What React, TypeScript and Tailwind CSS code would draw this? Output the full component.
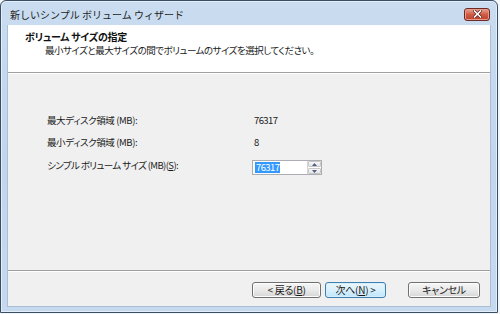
import React from "react";

const jp = "font-['Noto_Sans_CJK_JP','Noto_Sans',sans-serif]";

function Btn({ children, w, primary }: { children: React.ReactNode; w: string; primary?: boolean }) {
  return (
    <div
      className={`${w} h-[16px] rounded-[3px] border flex items-center justify-center text-[10px] leading-none text-[#1a1a1a] tracking-[-0.3px] [font-feature-settings:'palt'] ${
        primary
          ? "border-[#3c7fb1] bg-gradient-to-b from-[#eaf6fd] via-[#d9f0fc] to-[#bee6fd] shadow-[inset_0_0_0_1px_#d8eefb]"
          : "border-[#707070] bg-gradient-to-b from-[#f6f6f6] via-[#eaeaea] to-[#d6d6d6] shadow-[inset_0_0_0_1px_#fcfcfc]"
      }`}
    >
      {children}
    </div>
  );
}

export default function App() {
  return (
    <div className={`w-[500px] h-[314px] bg-[#f4f7fb] ${jp}`}>
      <div className="w-[498px] h-[313px] rounded-t-[6px] border border-[#3b4e63] bg-gradient-to-b from-[#c9dcf0] via-[#c1d6ec] to-[#c6daef] flex flex-col shadow-[inset_0_0_0_1px_#e4eefa]">
        {/* title bar */}
        <div className="h-[24px] flex items-center pl-[9px] pr-[7px] relative">
          <span className="text-[10px] leading-none text-[#1e1e1e] mt-[3px]">新しいシンプル ボリューム ウィザード</span>
          <div className="ml-auto mt-[2px] w-[26px] h-[13px] rounded-[3px] border border-[#6b2a22] bg-gradient-to-b from-[#e8a493] via-[#cf5b45] to-[#c0402e] flex items-center justify-center shadow-[inset_0_0_0_1px_#e99b8a]">
            <svg width="9" height="8" viewBox="0 0 9 8">
              <path d="M1.5 1 L7.5 7 M7.5 1 L1.5 7" stroke="#5a1e16" strokeWidth="3" strokeLinecap="square" />
              <path d="M1.5 1 L7.5 7 M7.5 1 L1.5 7" stroke="#ffffff" strokeWidth="1.6" strokeLinecap="square" />
            </svg>
          </div>
        </div>
        {/* client */}
        <div className="mx-[6px] mb-[5px] flex-1 flex flex-col bg-[#f0f0f0] border border-[#a9bfd8] border-t-0">
          {/* header */}
          <div className="h-[48px] bg-white border-b border-[#a0a0a0] flex flex-col pl-[17px] pt-[7px]">
            <div className="text-[10px] leading-none font-bold text-[#111] tracking-[-0.3px] [font-feature-settings:'palt']">ボリューム サイズの指定</div>
            <div className="text-[9.5px] leading-none text-[#1a1a1a] pl-[20px] mt-[4px] tracking-[-0.5px] [font-feature-settings:'palt']">
              最小サイズと最大サイズの間でボリュームのサイズを選択してください。
            </div>
          </div>
          {/* body */}
          <div className="flex-1 border-t border-white pt-[36px] pl-[39px] flex flex-col text-[9.5px] leading-none text-[#1a1a1a] tracking-[-0.4px] [font-feature-settings:'palt']">
            <div className="h-[22px] flex items-center">
              <div className="w-[207px]">最大ディスク領域 (MB):</div>
              <div className="tracking-[-0.6px]">76317</div>
            </div>
            <div className="h-[22px] flex items-center">
              <div className="w-[207px]">最小ディスク領域 (MB):</div>
              <div>8</div>
            </div>
            <div className="h-[24px] flex items-center">
              <div className="w-[205px] tracking-[-0.6px]">
                シンプル ボリューム サイズ (MB)(<span className="underline">S</span>):
              </div>
              <div className="mt-[3px] flex items-stretch h-[15px] border border-[#abadb3] bg-white">
                <div className="w-[54px] flex items-center pl-[2px]">
                  <span className="bg-[#3399ff] text-white px-[1px] h-[11px] flex items-center tracking-[-0.6px]">76317</span>
                </div>
                <div className="w-[14px] flex flex-col gap-[1px] border-l border-[#d5d5d5]">
                  <div className="flex-1 rounded-[1px] border border-[#c8c8c8] bg-gradient-to-b from-[#f8f8f8] to-[#e4e4e4] flex items-center justify-center">
                    <svg width="5" height="3" viewBox="0 0 5 3"><path d="M0 3 L2.5 0 L5 3 Z" fill="#4d6185" /></svg>
                  </div>
                  <div className="flex-1 rounded-[1px] border border-[#c8c8c8] bg-gradient-to-b from-[#f8f8f8] to-[#e4e4e4] flex items-center justify-center">
                    <svg width="5" height="3" viewBox="0 0 5 3"><path d="M0 0 L2.5 3 L5 0 Z" fill="#4d6185" /></svg>
                  </div>
                </div>
              </div>
            </div>
          </div>
          {/* footer */}
          <div className="h-[36px] border-t border-[#a0a0a0] shadow-[inset_0_1px_0_#ffffff] flex items-start justify-end pr-[10px] pt-[11px]">
            <div className="flex gap-[4px]">
              <Btn w="w-[69px]">
                &lt; 戻る(<span className="underline">B</span>)
              </Btn>
              <Btn w="w-[61px]" primary>
                次へ(<span className="underline">N</span>) &gt;
              </Btn>
            </div>
            <div className="ml-[22px]">
              <Btn w="w-[72px]">キャンセル</Btn>
            </div>
          </div>
        </div>
      </div>
    </div>
  );
}
